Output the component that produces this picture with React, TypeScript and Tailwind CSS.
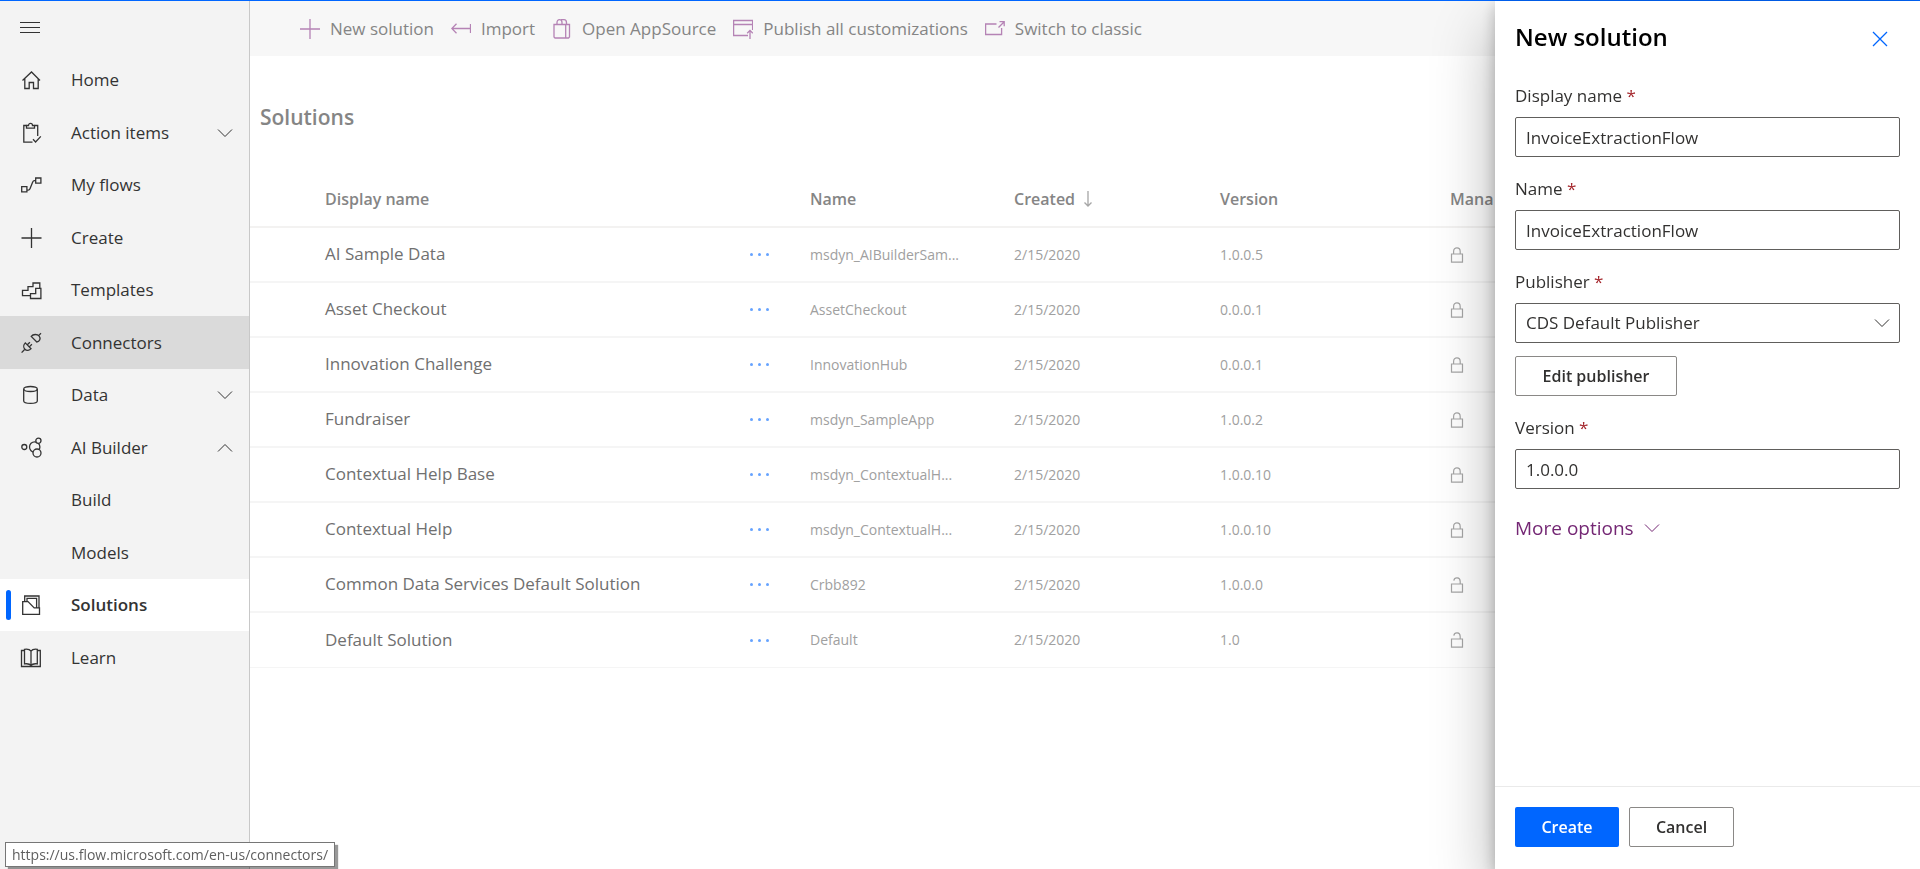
import { useState } from 'react';
import type { ReactNode } from 'react';
import clsx from 'clsx';

const navIcons: Record<string, ReactNode> = {
    home: <path d="M2.5 11.5 11.5 3l8.5 8.5M4.8 9.5v10h4.4v-6h4.3v6h4.7v-10" />,
    action: (
        <>
            <path d="M6.5 3.5H3.8v16.7h8.7M14.5 3.5h3.2V14" />
            <path d="M6.5 3.5h2c0-2.8 4-2.8 4 0h2v2.6h-8z" />
            <path d="m13 17.2 2.6 2.8 5.2-5.6" />
        </>
    ),
    flows: <path d="M1.7 12.7h5.2v5.2H1.7zM15.7 4h5.2v5.2h-5.2zM7 16.2h1.2c1 0 1.4-.4 1.8-1.4l2.6-6.6c.4-1 .8-1.5 1.8-1.5h1.3" />,
    plus: <path d="M11.5 1v20M1.5 11h20" />,
    templates: (
        <>
            <path d="M10.5 16.7h-8v-5.4H8V7.6h5V4h6.8v5" />
            <path d="M20.9 9.3v10.2H10.5v-4.8h5.2V9.3z" />
        </>
    ),
    connectors: (
        <>
            <path d="m11.2 4.4 5.6 5.6c3-.4 4.2-3.6 2.4-5.8s-6-2.400-8 .2zM18.800 3.400 21 1.200" />
            <path d="m5.300 10.900 5.800 5.800c-1.600 2-4.600 2.400-6.200.6s-1.600-4.600.4-6.400zM4.400 17.800l-2.800 2.800M7.300 12.800l2.600-2.600M9.300 14.900l2.600-2.600" />
        </>
    ),
    data: (
        <>
            <ellipse cx="10.5" cy="5" rx="6.8" ry="2.5" />
            <path d="M3.7 5v12c0 3.2 13.6 3.2 13.6 0V5" />
        </>
    ),
    ai: (
        <>
            <circle cx="4.3" cy="10" r="2.5" />
            <circle cx="14.7" cy="10" r="5.2" />
            <circle cx="18.4" cy="3.7" r="2.6" className="fill-[#f3f3f3]" />
            <circle cx="17" cy="16" r="4" className="fill-[#f3f3f3]" />
        </>
    ),
    solutions: (
        <>
            <path d="M2.7 7.6H8l6.2 6.3h5.3v6.5H2.7z" />
            <path d="M4.7 7.6V2H19v11.9M7 7.6V4.4h9.6v9.5" />
        </>
    ),
    learn: (
        <>
            <path d="M4.5 3.5h-3v16h18.8v-16h-3" />
            <path d="M11 4.2C9.8 2.4 6.5 2 4.5 2.3v14.6c2-.3 5.3-.1 6.5 1.8 1.2-1.9 4.2-2.1 6.3-1.8V2.3C15.2 2 12.2 2.4 11 4.2v14.5" />
        </>
    ),
};

const commands = [
    { label: 'New solution', icon: <path d="M10 0v20M0 10h20" /> },
    { label: 'Import', icon: <path d="M1 9.5h18.5M5.5 4.8.8 9.500l4.700 4.700M19.500 5v9" /> },
    {
        label: 'Open AppSource',
        icon: (
            <>
                <path d="M2 5.5h15.5V18l-1 1H3l-1-1z" />
                <path d="M13.7 5.5V19M5 5.5V3.6C5 1.6 6 .7 7.5.7S10 1.6 10 3.6v1.9M9 .7h3c1.500 0 2.500 1 2.500 3v1.800" />
            </>
        ),
    },
    {
        label: 'Publish all customizations',
        icon: <path d="M15 16.5H.6v-15h19V11M.6 5.5h19M17 20v-8.5M14.200 14.200l2.800-2.800 2.800 2.800" />,
    },
    {
        label: 'Switch to classic',
        icon: <path d="M11.5 5H.6v10.5h16V9M13.500 8.500l5.700-5.700M14.500 2.600h4.700v4.700" />,
    },
];

const navItems = [
    { label: 'Home', icon: 'home' },
    { label: 'Action items', icon: 'action', chevron: 'down' },
    { label: 'My flows', icon: 'flows' },
    { label: 'Create', icon: 'plus' },
    { label: 'Templates', icon: 'templates' },
    { label: 'Connectors', icon: 'connectors', hovered: true },
    { label: 'Data', icon: 'data', chevron: 'down' },
    { label: 'AI Builder', icon: 'ai', chevron: 'up' },
    { label: 'Build' },
    { label: 'Models' },
    { label: 'Solutions', icon: 'solutions', active: true },
    { label: 'Learn', icon: 'learn' },
];

const solutions = [
    { title: 'AI Sample Data', name: 'msdyn_AIBuilderSam...', version: '1.0.0.5', locked: true },
    { title: 'Asset Checkout', name: 'AssetCheckout', version: '0.0.0.1', locked: true },
    { title: 'Innovation Challenge', name: 'InnovationHub', version: '0.0.0.1', locked: true },
    { title: 'Fundraiser', name: 'msdyn_SampleApp', version: '1.0.0.2', locked: true },
    { title: 'Contextual Help Base', name: 'msdyn_ContextualH...', version: '1.0.0.10', locked: true },
    { title: 'Contextual Help', name: 'msdyn_ContextualH...', version: '1.0.0.10', locked: true },
    { title: 'Common Data Services Default Solution', name: 'Crbb892', version: '1.0.0.0', locked: false },
    { title: 'Default Solution', name: 'Default', version: '1.0', locked: false },
];

function Chevron({ up = false, className = '' }: { up?: boolean; className?: string }) {
    return (
        <svg viewBox="0 0 16 10" className={clsx('w-4 h-2.5 shrink-0', className)} fill="none" stroke="currentColor">
            <path d={up ? 'm1 8.5 7-7 7 7' : 'm1 1.5 7 7 7-7'} />
        </svg>
    );
}

function Lock({ locked }: { locked: boolean }) {
    return (
        <svg viewBox="0 0 14 16" className="w-3.5 h-4" fill="none" stroke="#a6a6a6" strokeWidth="1.2" role="img" aria-label={locked ? 'Locked' : 'Unlocked'}>
            <path d="M1.5 7h11v8.2h-11z" />
            <path d={locked ? 'M3.6 7V4.4c0-4.800 6.600-4.800 6.600 0V7' : 'M3.8 3.6c.7-3.800 6.400-3.500 6.400.8V7'} />
        </svg>
    );
}

function Sidebar() {
    return (
        <aside className="w-[250px] shrink-0 bg-[#f3f3f3] border-r border-[#c8c8c8] text-[#333333]">
            <div className="h-[53px] px-5 flex items-center">
                <button aria-label="Toggle navigation">
                    <svg viewBox="0 0 20 12" className="w-5 h-3" stroke="currentColor">
                        <path d="M0 .5h20M0 5.5h20M0 10.5h20" />
                    </svg>
                </button>
            </div>
            <ul>
                {navItems.map((item) => (
                    <li key={item.label} className="h-[52px] even:h-[53px]">
                        <a
                            href="#"
                            className={clsx(
                                'relative flex items-center h-full pl-5 pr-4 text-[17px]',
                                item.hovered && 'bg-[#dadada]',
                                item.active && 'bg-white font-semibold'
                            )}
                        >
                            {item.active && <span className="absolute left-1.5 w-[5px] h-[30px] rounded-sm bg-[#0066ff]" />}
                            <span className="w-[51px] shrink-0">
                                {item.icon && (
                                    <svg viewBox="0 0 22 22" className="w-[22px] h-[22px]" fill="none" stroke="currentColor" strokeWidth="1.3">
                                        {navIcons[item.icon]}
                                    </svg>
                                )}
                            </span>
                            <span className="grow">{item.label}</span>
                            {item.chevron && <Chevron up={item.chevron === 'up'} />}
                        </a>
                    </li>
                ))}
            </ul>
        </aside>
    );
}

function SolutionsTable() {
    return (
        <table className="w-full mt-[39px] table-fixed border-separate border-spacing-0 text-left">
            <colgroup>
                <col className="w-[75px]" />
                <col />
                <col className="w-[60px]" />
                <col className="w-[204px]" />
                <col className="w-[206px]" />
                <col className="w-[230px]" />
                <col className="w-[45px]" />
            </colgroup>
            <thead>
                <tr className="h-[56px] text-base text-[#858585] [&>th]:font-semibold [&>th]:border-b-2 [&>th]:border-[#f3f2f1]">
                    <th />
                    <th>Display name</th>
                    <th />
                    <th>Name</th>
                    <th>
                        <span className="flex items-center gap-2">
                            Created
                            <svg viewBox="0 0 10 16" className="w-2.5 h-4" fill="none" stroke="#a6a6a6" strokeWidth="1.3">
                                <path d="M5 0v15M1.5 11.5 5 15l3.5-3.5" />
                            </svg>
                        </span>
                    </th>
                    <th>Version</th>
                    <th>Mana</th>
                </tr>
            </thead>
            <tbody>
                {solutions.map((s) => (
                    <tr key={s.title} className="h-[55px] text-sm text-[#a0a0a0] [&>td]:border-b-2 [&>td]:border-[#f5f5f5] last:[&>td]:border-b">
                        <td />
                        <td className="text-[17px] text-[#707070]">{s.title}</td>
                        <td>
                            <button aria-label={`More commands for ${s.title}`} className="flex gap-[5px]">
                                <span className="size-[3px] rounded-full bg-[#66a3ff]" />
                                <span className="size-[3px] rounded-full bg-[#66a3ff]" />
                                <span className="size-[3px] rounded-full bg-[#66a3ff]" />
                            </button>
                        </td>
                        <td>{s.name}</td>
                        <td>2/15/2020</td>
                        <td>{s.version}</td>
                        <td>
                            <Lock locked={s.locked} />
                        </td>
                    </tr>
                ))}
            </tbody>
        </table>
    );
}

function Label({ htmlFor, children }: { htmlFor: string; children: ReactNode }) {
    return (
        <label htmlFor={htmlFor} className="block leading-6 mb-[9px]">
            {children} <span className="text-[#a4262c]">*</span>
        </label>
    );
}

const fieldClass = 'block w-full h-10 px-2.5 rounded-xs border border-[#605e5c] bg-white';

function NewSolutionPanel() {
    const [displayName, setDisplayName] = useState('InvoiceExtractionFlow');
    const [name, setName] = useState('InvoiceExtractionFlow');
    const [version, setVersion] = useState('1.0.0.0');

    return (
        <section className="fixed top-px right-0 bottom-0 w-[425px] flex flex-col bg-white text-[#323130] shadow-[0_26px_58px_rgba(0,0,0,0.3),0_5px_14px_rgba(0,0,0,0.24)]">
            <header className="flex items-start justify-between h-[83px] pl-5 pr-8 pt-5">
                <h2 className="text-2xl leading-8 font-semibold text-black">New solution</h2>
                <button aria-label="Close" className="mt-2.5">
                    <svg viewBox="0 0 16 16" className="w-4 h-4" fill="none" stroke="#0066ff" strokeWidth="1.3">
                        <path d="m1 1 14 14M15 1 1 15" />
                    </svg>
                </button>
            </header>

            <form className="grow flex flex-col gap-5 px-5 text-[17px]">
                <div>
                    <Label htmlFor="display-name">Display name</Label>
                    <input id="display-name" className={fieldClass} value={displayName} onChange={(e) => setDisplayName(e.target.value)} />
                </div>
                <div>
                    <Label htmlFor="name">Name</Label>
                    <input id="name" className={fieldClass} value={name} onChange={(e) => setName(e.target.value)} />
                </div>
                <div>
                    <Label htmlFor="publisher">Publisher</Label>
                    <div className="relative">
                        <select id="publisher" className={clsx(fieldClass, 'appearance-none')}>
                            <option>CDS Default Publisher</option>
                        </select>
                        <Chevron className="absolute right-2.5 top-[15px] pointer-events-none" />
                    </div>
                    <button type="button" className="mt-[13px] h-10 w-[162px] rounded-xs border border-[#8a8886] text-base font-semibold">
                        Edit publisher
                    </button>
                </div>
                <div>
                    <Label htmlFor="version">Version</Label>
                    <input id="version" className={fieldClass} value={version} onChange={(e) => setVersion(e.target.value)} />
                </div>
                <button type="button" className="flex items-center gap-2.5 mt-1 self-start text-[19px] leading-[30px] text-[#742774]">
                    More options
                    <Chevron />
                </button>
            </form>

            <footer className="flex gap-2.5 px-5 pt-5 pb-[22px] border-t border-[#eaeaea]">
                <button className="h-10 w-[104px] rounded-xs bg-[#0066ff] text-white font-semibold">Create</button>
                <button className="h-10 w-[105px] rounded-xs border border-[#8a8886] font-semibold">Cancel</button>
            </footer>
        </section>
    );
}

export default function App() {
    return (
        <div className="flex min-h-screen bg-white border-t border-[#0066ff] overflow-hidden font-['Segoe_UI','Open_Sans',sans-serif]">
            <Sidebar />

            <main className="grow min-w-0 mr-[425px]">
                <div className="flex items-center gap-[17px] h-[55px] pl-[50px] bg-[#f7f7f7]">
                    {commands.map((c) => (
                        <button key={c.label} className="flex items-center gap-2.5 text-[17px] text-[#858585] whitespace-nowrap">
                            <svg viewBox="0 0 20 20" className="w-5 h-5" fill="none" stroke="#b583b5" strokeWidth="1.3">
                                {c.icon}
                            </svg>
                            {c.label}
                        </button>
                    ))}
                </div>
                <h1 className="mt-[45px] pl-2.5 text-[21px] leading-8 font-semibold text-[#858585]">Solutions</h1>
                <SolutionsTable />
            </main>

            <NewSolutionPanel />

            {/* link target shown by the browser on hover */}
            <div className="fixed left-[5px] bottom-0.5 px-1.5 border border-[#767676] bg-white text-sm leading-[23px] text-[#5f5f5f] shadow-[3px_3px_1px_rgba(0,0,0,0.4)]">
                https://us.flow.microsoft.com/en-us/connectors/
            </div>
        </div>
    );
}
